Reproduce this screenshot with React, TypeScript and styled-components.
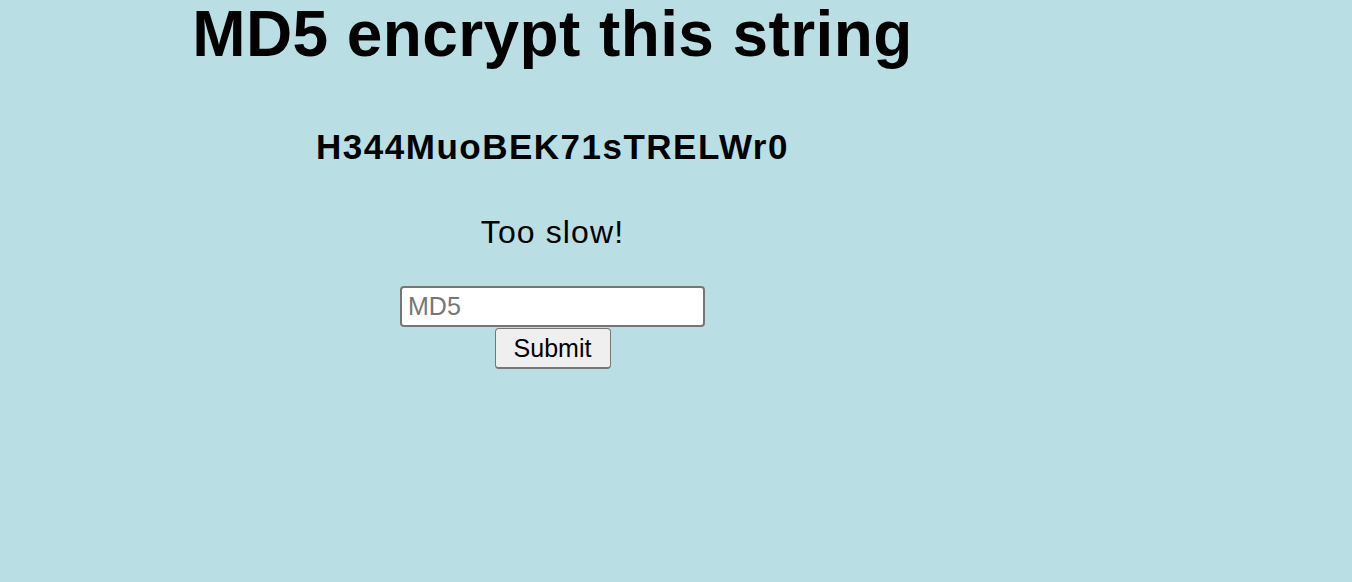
import * as React from 'react';
import styled, { createGlobalStyle } from 'styled-components';

const GlobalStyle = createGlobalStyle`
  html, body {
    margin: 0;
    padding: 0;
    background: #b9dfe4;
  }

  body {
    font-family: "Liberation Sans", Arial, Helvetica, sans-serif;
    color: #000;
  }
`;

const Page = styled.main`
  width: 1105px;
  min-height: 582px;
  display: flex;
  flex-direction: column;
  align-items: center;
  text-align: center;
`;

const Title = styled.h1`
  margin: 0;
  font-size: 64px;
  line-height: 68px;
  font-weight: 700;
  letter-spacing: 0.4px;
`;

const Challenge = styled.h2`
  margin: 59px 0 0;
  font-size: 35px;
  line-height: 40px;
  font-weight: 700;
  letter-spacing: 1.5px;
`;

const Status = styled.p`
  margin: 47px 0 0;
  font-size: 32px;
  line-height: 37px;
  letter-spacing: 1.1px;
`;

const Form = styled.form`
  margin-top: 35px;
  display: flex;
  flex-direction: column;
  align-items: center;
  gap: 1px;
`;

const HashInput = styled.input`
  box-sizing: border-box;
  width: 305px;
  height: 41px;
  padding: 0 6px;
  border: 2px solid #767676;
  border-radius: 4px;
  background: #fff;
  font-family: inherit;
  font-size: 25px;
  color: #000;
  outline: none;

  &::placeholder {
    color: #767676;
  }
`;

const SubmitButton = styled.button`
  box-sizing: border-box;
  width: 116px;
  height: 41px;
  padding: 0;
  border: 1.5px solid #767676;
  border-bottom-width: 2px;
  border-radius: 4px;
  background: #efefef;
  font-family: inherit;
  font-size: 25px;
  color: #000;
`;

export default function App() {
  return (
    <>
      <GlobalStyle />
      <Page>
        <Title>MD5 encrypt this string</Title>
        <Challenge>H344MuoBEK71sTRELWr0</Challenge>
        <Status>Too slow!</Status>
        <Form onSubmit={(e) => e.preventDefault()}>
          <HashInput type="text" placeholder="MD5" />
          <SubmitButton type="submit">Submit</SubmitButton>
        </Form>
      </Page>
    </>
  );
}
